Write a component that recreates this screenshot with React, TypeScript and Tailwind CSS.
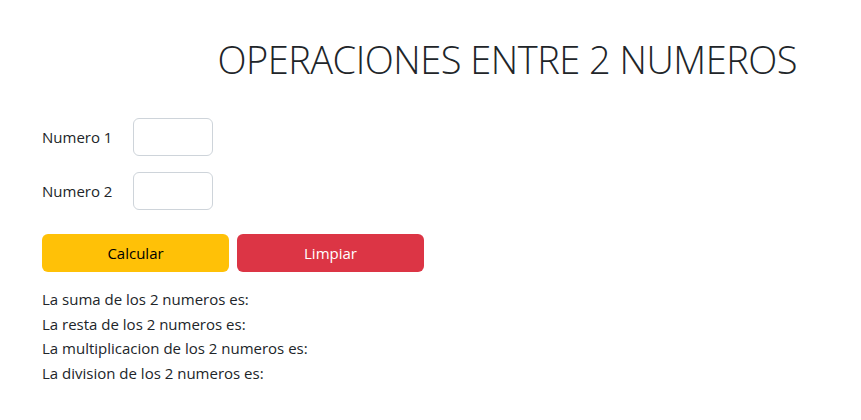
export default function App() {
  return (
    <div
      className="min-h-[420px] bg-white text-[#212529] px-[42px]"
      style={{ fontFamily: '"Open Sans", "Noto Sans", sans-serif' }}
    >
      <div className="pt-[35px] flex justify-end pr-[22px]">
        <h1 className="text-[38px] leading-[48px] font-light tracking-[-0.5px]">
          OPERACIONES ENTRE 2 NUMEROS
        </h1>
      </div>

      <div className="mt-[35px] flex flex-col gap-[16px]">
        <div className="flex items-center">
          <label className="w-[91px] text-[15px]">Numero 1</label>
          <input className="w-[80px] h-[38px] border border-[#ced4da] rounded-[6px] px-2" />
        </div>
        <div className="flex items-center">
          <label className="w-[91px] text-[15px]">Numero 2</label>
          <input className="w-[80px] h-[38px] border border-[#ced4da] rounded-[6px] px-2" />
        </div>
      </div>

      <div className="mt-[24px] flex gap-[8px]">
        <button className="w-[187px] h-[38px] rounded-[6px] bg-[#ffc107] text-black text-[15px]">
          Calcular
        </button>
        <button className="w-[187px] h-[38px] rounded-[6px] bg-[#dc3545] text-white text-[15px]">
          Limpiar
        </button>
      </div>

      <div className="mt-[15px] flex flex-col text-[15px] leading-[24.5px]">
        <p>La suma de los 2 numeros es:</p>
        <p>La resta de los 2 numeros es:</p>
        <p>La multiplicacion de los 2 numeros es:</p>
        <p>La division de los 2 numeros es:</p>
      </div>
    </div>
  );
}
